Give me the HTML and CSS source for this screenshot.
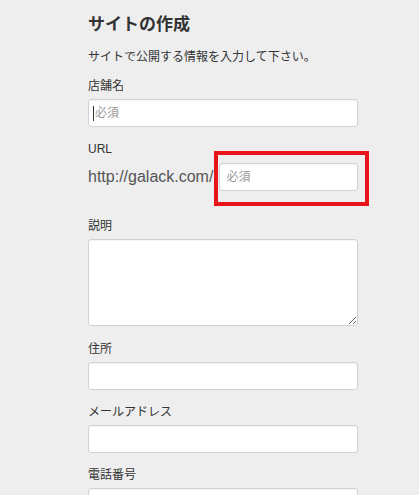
FILE: index.html
```html
<!DOCTYPE html>
<html lang="ja">
<head>
    <meta charset="UTF-8">
    <meta name="viewport" content="width=device-width, initial-scale=1.0">
    <title>サイトの作成</title>
    <link rel="stylesheet" href="styles.css">
</head>
<body>
    <div class="container">
        <h1>サイトの作成</h1>
        <p class="lead">サイトで公開する情報を入力して下さい。</p>
        <form class="site-form">
            <div class="field">
                <label for="shop-name">店舗名</label>
                <div class="input-wrap">
                    <input type="text" id="shop-name" placeholder="必須">
                    <span class="caret"></span>
                </div>
            </div>
            <div class="field field-url">
                <label for="shop-url">URL</label>
                <div class="url-row">
                    <span class="url-prefix">http://galack.com/</span>
                    <input type="text" id="shop-url" placeholder="必須">
                    <span class="highlight"></span>
                </div>
            </div>
            <div class="field field-desc">
                <label for="description">説明</label>
                <textarea id="description"></textarea>
            </div>
            <div class="field">
                <label for="address">住所</label>
                <input type="text" id="address">
            </div>
            <div class="field">
                <label for="email">メールアドレス</label>
                <input type="email" id="email">
            </div>
            <div class="field">
                <label for="phone">電話番号</label>
                <input type="tel" id="phone">
            </div>
        </form>
    </div>
</body>
</html>
```
FILE: styles.css
```css
body {
    font-family: 'Liberation Sans', 'Noto Sans CJK JP', sans-serif;
    margin: 0;
    padding: 0;
    background-color: #eeeeee;
    color: #333;
}
.container {
    width: 270px;
    margin-left: 88px;
}
h1 {
    font-size: 17px;
    line-height: 24px;
    margin: 13px 0 0;
    color: #333;
}
.lead {
    font-size: 12px;
    line-height: 18px;
    margin: 11px 0 11px;
}
.field {
    margin-bottom: 13px;
}
.field label {
    display: block;
    font-size: 12px;
    line-height: 18px;
    margin-bottom: 4px;
}
.field input, .field textarea {
    display: block;
    width: 100%;
    height: 28px;
    padding: 0 6px;
    font-size: 12px;
    font-family: 'Liberation Sans', 'Noto Sans CJK JP', sans-serif;
    background: white;
    border: 1px solid #d2d2d2;
    border-radius: 3px;
    box-shadow: inset 0 1px 1px rgba(0,0,0,0.05);
    box-sizing: border-box;
    outline: none;
}
.field input::placeholder {
    color: #9a9a9a;
}
.input-wrap {
    position: relative;
}
.caret {
    position: absolute;
    left: 5px;
    top: 7px;
    width: 1px;
    height: 15px;
    background: #333;
}
.field-url label {
    margin-bottom: 5px;
}
.field-url {
    margin-bottom: 26px;
}
.url-row {
    position: relative;
    display: flex;
    align-items: center;
    gap: 6px;
}
.url-prefix {
    font-size: 16px;
    color: #555;
    white-space: nowrap;
}
.url-row input {
    flex: 1;
    width: auto;
    min-width: 0;
}
.highlight {
    position: absolute;
    left: 126px;
    top: -12px;
    width: 155px;
    height: 55px;
    border: 4px solid #e8141c;
    box-sizing: border-box;
}
.field-desc textarea {
    height: 87px;
    resize: vertical;
}
.field-desc {
    margin-bottom: 14px;
}
```
